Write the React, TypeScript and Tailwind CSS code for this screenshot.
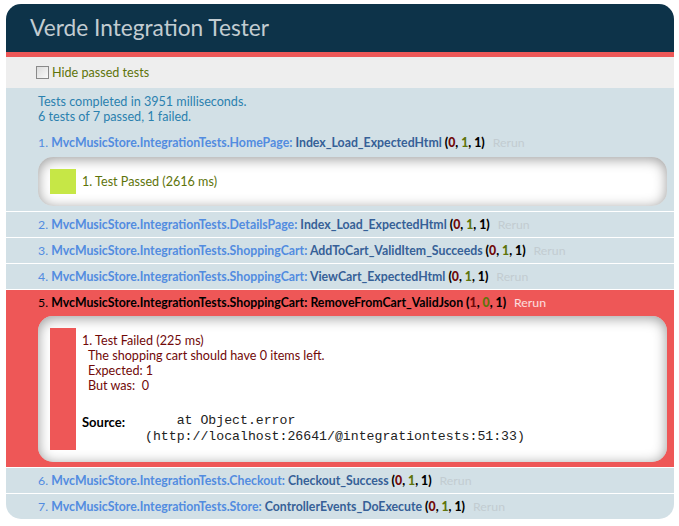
import React from 'react';

interface TestRow {
  n: number;
  module: string;
  name: string;
  counts: [number, number, number];
  failed?: boolean;
  detail?: 'pass' | 'fail';
}

const rows: TestRow[] = [
  { n: 1, module: 'MvcMusicStore.IntegrationTests.HomePage', name: 'Index_Load_ExpectedHtml', counts: [0, 1, 1], detail: 'pass' },
  { n: 2, module: 'MvcMusicStore.IntegrationTests.DetailsPage', name: 'Index_Load_ExpectedHtml', counts: [0, 1, 1] },
  { n: 3, module: 'MvcMusicStore.IntegrationTests.ShoppingCart', name: 'AddToCart_ValidItem_Succeeds', counts: [0, 1, 1] },
  { n: 4, module: 'MvcMusicStore.IntegrationTests.ShoppingCart', name: 'ViewCart_ExpectedHtml', counts: [0, 1, 1] },
  { n: 5, module: 'MvcMusicStore.IntegrationTests.ShoppingCart', name: 'RemoveFromCart_ValidJson', counts: [1, 0, 1], failed: true, detail: 'fail' },
  { n: 6, module: 'MvcMusicStore.IntegrationTests.Checkout', name: 'Checkout_Success', counts: [0, 1, 1] },
  { n: 7, module: 'MvcMusicStore.IntegrationTests.Store', name: 'ControllerEvents_DoExecute', counts: [0, 1, 1] },
];

const Counts: React.FC<{ c: [number, number, number] }> = ({ c }) => (
  <b className="text-black">
    (<span className="text-[#710909]">{c[0]}</span>, <span className="text-[#5e740b]">{c[1]}</span>, {c[2]})
  </b>
);

const Row: React.FC<{ row: TestRow; last: boolean }> = ({ row, last }) => {
  const fail = row.failed;
  return (
    <li
      className={`pl-[32px] pr-[7px] py-[5px] leading-[15px] ${last ? 'rounded-b-[15px]' : 'border-b border-white'} ${
        fail ? 'bg-[#ee5757] text-black' : 'bg-[#d2e0e6] text-[#528ce0]'
      }`}
    >
      <div className="whitespace-nowrap text-[12.3px]">
        <span>{row.n}. </span>
        <strong className="font-bold">
          <span>{row.module}</span>:{' '}
          <span className={fail ? 'text-black' : 'text-[#366097]'}>{row.name}</span> <Counts c={row.counts} />
        </strong>
        <span className={`font-normal pl-[8px] ${fail ? 'text-white/80' : 'text-[#c2ccd1]'}`}>Rerun</span>
      </div>

      {row.detail === 'pass' && (
        <div className="mt-[7px] p-[6px] bg-white rounded-[15px] shadow-[inset_0px_2px_13px_#999]">
          <div className="m-[6px] border-l-[26px] border-[#c6e746] pl-[6px] py-[5px] text-[#5e740b]">
            1. Test Passed (2616 ms)
          </div>
        </div>
      )}

      {row.detail === 'fail' && (
        <div className="mt-[6px] p-[6px] bg-white rounded-[15px] shadow-[inset_0px_2px_13px_#999]">
          <div className="m-[6px] border-l-[26px] border-[#ee5757] pl-[6px] py-[5px] text-[#710909]">
            <div>1. Test Failed (225 ms)</div>
            <div className="pl-[6px]">The shopping cart should have 0 items left.</div>
            <div className="pl-[6px]">Expected: 1</div>
            <div className="pl-[6px] whitespace-pre">But was:  0</div>
            <div className="flex mt-[20px] text-black">
              <div className="w-[63px] font-bold text-[13px] leading-[16px] pt-[1px]">Source:</div>
              <div className="font-['Liberation_Mono',monospace] text-[13.2px] leading-[16px] whitespace-pre text-[#222]">
                {'    at Object.error\n(http://localhost:26641/@integrationtests:51:33)'}
              </div>
            </div>
          </div>
        </div>
      )}
    </li>
  );
};

export default function App() {
  return (
    <div className="min-h-screen bg-white pt-[4px] pl-[6px] font-['Lato','Liberation_Sans',sans-serif] text-[12.6px]">
      <div className="w-[668px]">
        <h1 className="bg-[#0d3349] text-[#c2ccd1] rounded-t-[15px] pl-[24px] py-[12px] text-[22.7px] leading-[24px] font-normal">
          Verde Integration Tester
        </h1>
        <div className="h-[5px] bg-[#ee5757]" />
        <div className="bg-[#eeeeee] text-[#5e740b] pl-[30px] py-[8px] leading-[15px] flex items-center">
          <span className="w-[13px] h-[13px] border border-[#8a8a8a] bg-gradient-to-br from-[#dcdcdc] to-[#fafafa] mr-[3px] inline-block" />
          <span>Hide passed tests</span>
        </div>
        <div className="bg-[#d2e0e6] text-[#2b81af] pl-[32px] pt-[6px] pb-[6px] leading-[15px]">
          <div>Tests completed in 3951 milliseconds.</div>
          <div>6 tests of 7 passed, 1 failed.</div>
        </div>
        <ol>
          {rows.map((r, i) => (
            <Row key={r.n} row={r} last={i === rows.length - 1} />
          ))}
        </ol>
      </div>
    </div>
  );
}
